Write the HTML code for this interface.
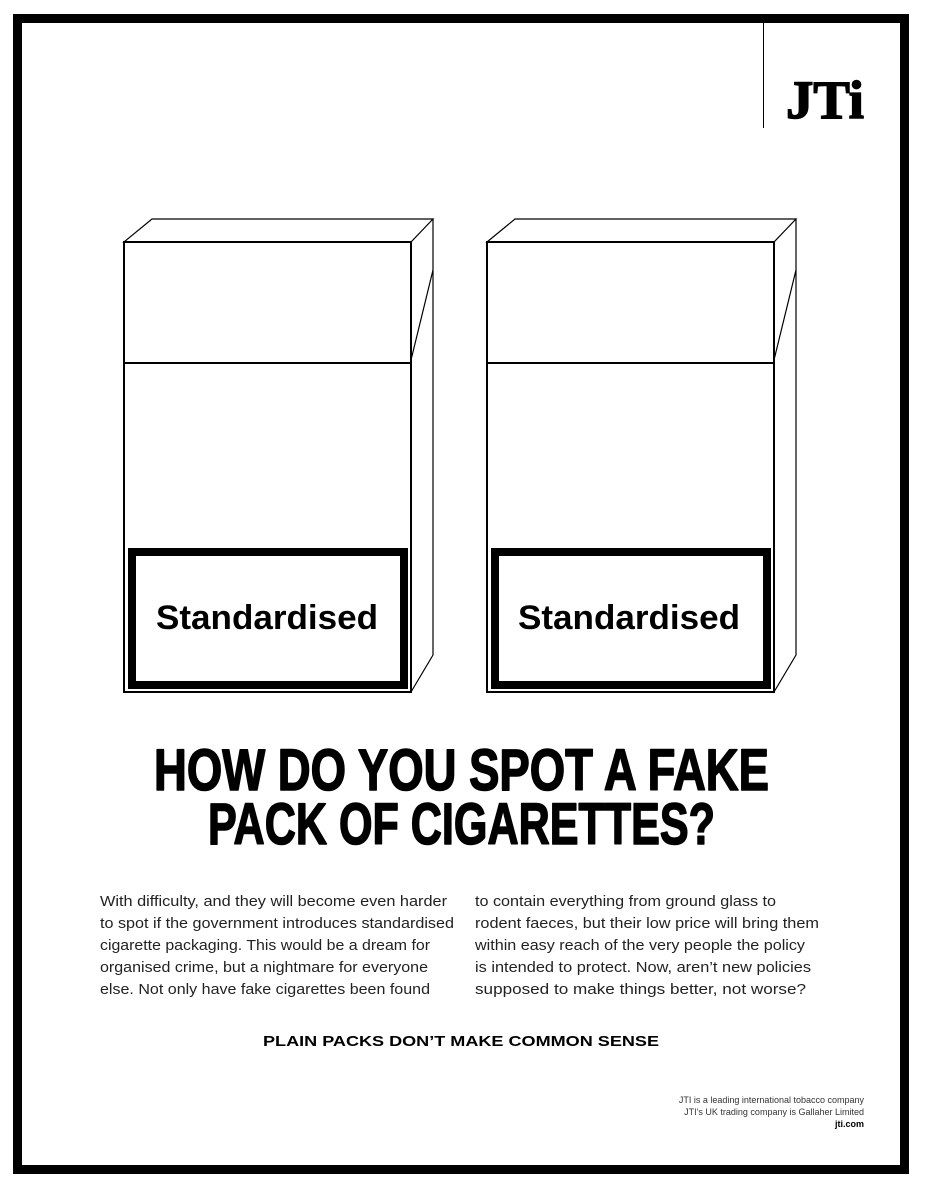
<!DOCTYPE html>
<html><head><meta charset="utf-8"><style>html,body{margin:0;padding:0;background:#fff}svg{display:block}</style></head>
<body>
<svg width="932" height="1197" viewBox="0 0 932 1197" xmlns="http://www.w3.org/2000/svg">
<rect x="0" y="0" width="932" height="1197" fill="#fff"/>
<rect x="17.5" y="18.5" width="887" height="1151" fill="none" stroke="#000" stroke-width="9"/>
<line x1="763.5" y1="22" x2="763.5" y2="128" stroke="#000" stroke-width="1"/>
<text x="786" y="118" font-family="Liberation Serif, serif" font-weight="bold" font-size="54" textLength="78" lengthAdjust="spacingAndGlyphs" stroke="#000" stroke-width="1.5">JTi</text>

<g id="pack" fill="none" stroke="#000">
  <polygon points="124,242 152,219 433,219 411,242" stroke-width="1.2"/>
  <rect x="124" y="242" width="287" height="450" stroke-width="2"/>
  <line x1="124" y1="363" x2="411" y2="363" stroke-width="2"/>
  <polyline points="433,219 433,655 411,692" stroke-width="1.2"/>
  <line x1="433" y1="270" x2="411" y2="360" stroke-width="1.2"/>
  <rect x="132" y="552" width="272" height="133" stroke-width="8"/>
</g>
<use href="#pack" x="363"/>
<text x="156" y="629" font-family="Liberation Sans, sans-serif" font-weight="bold" font-size="34" textLength="222" lengthAdjust="spacingAndGlyphs">Standardised</text>
<text x="518" y="629" font-family="Liberation Sans, sans-serif" font-weight="bold" font-size="34" textLength="222" lengthAdjust="spacingAndGlyphs">Standardised</text>

<g font-family="Liberation Sans, sans-serif" font-weight="bold" font-size="58" stroke="#000" stroke-width="1.6" stroke-linejoin="round">
<text x="154" y="790" textLength="615" lengthAdjust="spacingAndGlyphs">HOW DO YOU SPOT A FAKE</text>
<text x="208" y="844" textLength="507" lengthAdjust="spacingAndGlyphs">PACK OF CIGARETTES?</text>
</g>

<g font-family="Liberation Sans, sans-serif" font-size="15" fill="#222">
<text x="100" y="906" textLength="347" lengthAdjust="spacingAndGlyphs">With difficulty, and they will become even harder</text>
<text x="100" y="928" textLength="354" lengthAdjust="spacingAndGlyphs">to spot if the government introduces standardised</text>
<text x="100" y="950" textLength="330" lengthAdjust="spacingAndGlyphs">cigarette packaging. This would be a dream for</text>
<text x="100" y="972" textLength="328" lengthAdjust="spacingAndGlyphs">organised crime, but a nightmare for everyone</text>
<text x="100" y="994" textLength="330" lengthAdjust="spacingAndGlyphs">else. Not only have fake cigarettes been found</text>
<text x="475" y="906" textLength="301" lengthAdjust="spacingAndGlyphs">to contain everything from ground glass to</text>
<text x="475" y="928" textLength="344" lengthAdjust="spacingAndGlyphs">rodent faeces, but their low price will bring them</text>
<text x="475" y="950" textLength="330" lengthAdjust="spacingAndGlyphs">within easy reach of the very people the policy</text>
<text x="475" y="972" textLength="336" lengthAdjust="spacingAndGlyphs">is intended to protect. Now, aren’t new policies</text>
<text x="475" y="994" textLength="331" lengthAdjust="spacingAndGlyphs">supposed to make things better, not worse?</text>
</g>
<text x="263" y="1046" font-family="Liberation Sans, sans-serif" font-weight="bold" font-size="15" textLength="396" lengthAdjust="spacingAndGlyphs">PLAIN PACKS DON’T MAKE COMMON SENSE</text>

<g font-family="Liberation Sans, sans-serif" font-size="9" text-anchor="end" fill="#333">
<text x="864" y="1103">JTI is a leading international tobacco company</text>
<text x="864" y="1115">JTI’s UK trading company is Gallaher Limited</text>
<text x="864" y="1127" fill="#000" font-weight="bold">jti.com</text>
</g>
</svg>
</body></html>
